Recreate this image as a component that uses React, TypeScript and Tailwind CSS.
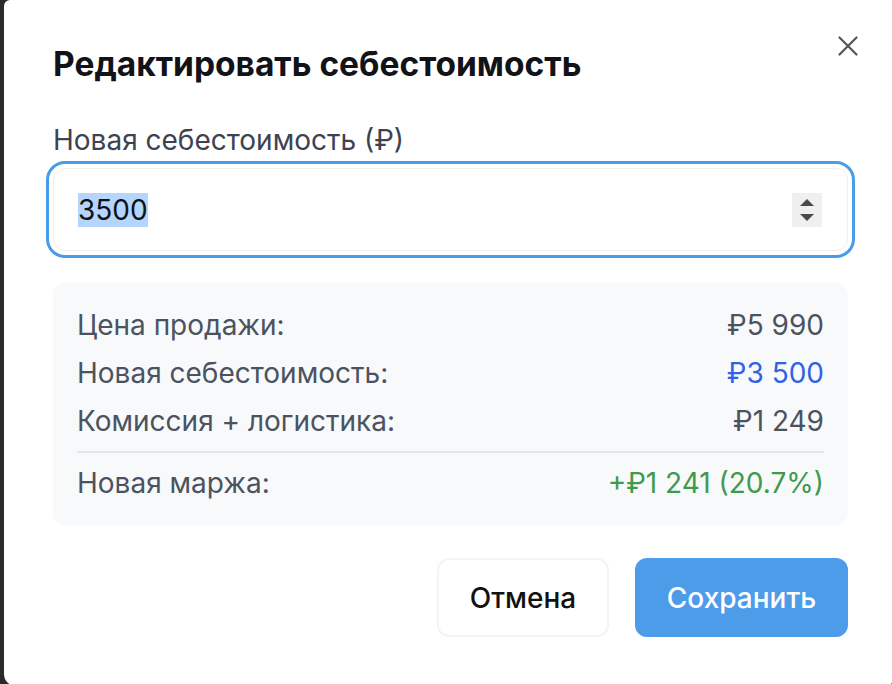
const rows = [
  { label: "Цена продажи:", value: "₽5 990", color: "text-[#4b5260]" },
  { label: "Новая себестоимость:", value: "₽3 500", color: "text-[#2f62e6]" },
  { label: "Комиссия + логистика:", value: "₽1 249", color: "text-[#4b5260]" },
];

const App = () => {
  return (
    <div className="h-screen overflow-hidden bg-[#2b2b2b] pl-[4px] font-['Inter',sans-serif]">
      <div className="relative h-[686px] w-[892px] rounded-tl-[6px] rounded-b-xl bg-white pl-[49px] pr-[48px] pt-[44px]">
        <button className="absolute right-[38px] top-[36px]">
          <svg width="20" height="20" viewBox="0 0 20 20" stroke="#555" strokeWidth="2.2" strokeLinecap="round">
            <path d="M1.5 1.5 L18.5 18.5 M18.5 1.5 L1.5 18.5" />
          </svg>
        </button>
        <h2 className="text-[33.5px] font-bold leading-[40px] text-[#111318]">
          Редактировать себестоимость
        </h2>
        <label className="mt-[39px] block text-[28px] leading-[34px] text-[#3d4350]">
          Новая себестоимость (₽)
        </label>
        <div className="mt-[11px] flex h-[83px] items-center rounded-xl border border-[#f0f0f0] pl-[24px] pr-[25px] outline outline-[3px] outline-offset-[4px] outline-[#4a9be8]">
          <span className="bg-[#b4d5fe] text-[28px] leading-[34px] text-[#111]">3500</span>
          <div className="ml-auto flex h-[34px] w-[30px] flex-col items-center justify-center gap-[8px] bg-[#efefef]">
            <svg width="14" height="7" viewBox="0 0 14 7">
              <path d="M7 0 L14 7 L0 7 Z" fill="#4a4a4a" />
            </svg>
            <svg width="14" height="7" viewBox="0 0 14 7">
              <path d="M0 0 L14 0 L7 7 Z" fill="#4a4a4a" />
            </svg>
          </div>
        </div>
        <div className="mt-[32px] rounded-xl bg-[#f8f9fb] px-[24px] py-[24px]">
          <div className="flex flex-col gap-[12px]">
            {rows.map((r) => (
              <div key={r.label} className="flex items-center justify-between text-[28px] leading-[36px]">
                <span className="text-[#4b5260]">{r.label}</span>
                <span className={r.color}>{r.value}</span>
              </div>
            ))}
          </div>
          <div className="my-[12px] h-[2px] bg-[#e3e6ea]" />
          <div className="flex items-center justify-between text-[28px] leading-[36px]">
            <span className="text-[#4b5260]">Новая маржа:</span>
            <span className="text-[#3f9a4c]">+₽1 241 (20.7%)</span>
          </div>
        </div>
        <div className="mt-[33px] flex justify-end gap-[26px]">
          <button className="h-[79px] w-[172px] rounded-xl border-2 border-[#f4f4f4] text-[28px] font-medium text-[#111]">
            Отмена
          </button>
          <button className="h-[79px] w-[213px] rounded-xl bg-[#4d9ce9] text-[28px] font-medium text-white">
            Сохранить
          </button>
        </div>
      </div>
    </div>
  );
};

export default App;
